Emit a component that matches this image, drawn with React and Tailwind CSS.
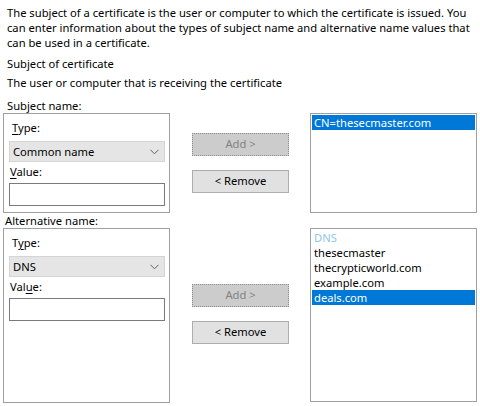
import React from 'react';

const font = { fontFamily: '"Segoe UI", "Noto Sans", "Liberation Sans", sans-serif' };

function Key({ children }) {
    return <span className="underline underline-offset-2">{children}</span>;
}

function Chevron() {
    return (
        <svg width="9" height="6" viewBox="0 0 9 6" className="text-[#606060]">
            <path d="M0.5 0.8 L4.5 4.8 L8.5 0.8" fill="none" stroke="currentColor" strokeWidth="1" />
        </svg>
    );
}

// group box with type combo and value input
function NameBox({ typeLabel, valueLabel, selected, height }) {
    return (
        <div className={`w-[167px] ${height} border border-[#a0a0a0] pl-[5px] pr-[4px] pt-[6px]`}>
            <div className="leading-[15px] pl-[3px]">{typeLabel}</div>
            <div className="mt-[6px] h-[21px] bg-[#e5e5e5] border border-[#d4d4d4] flex items-center justify-between pl-[3px] pr-[5px]">
                <span className="leading-[15px]">{selected}</span>
                <Chevron />
            </div>
            <div className="mt-[2px] leading-[15px] pl-[1px]">{valueLabel}</div>
            <div className="mt-[4px] h-[23px] border border-[#7a7a7a] bg-white" />
        </div>
    );
}

function Buttons({ top }) {
    return (
        <div className={`ml-[22px] w-[97px] flex flex-col ${top}`}>
            <div className="h-[23px] bg-[#cccccc] border border-dotted border-[#8c8c8c] flex items-center justify-center text-[#838383]">
                Add &gt;
            </div>
            <div className="mt-[14px] h-[23px] bg-[#e1e1e1] border border-[#adadad] flex items-center justify-center">
                &lt; Remove
            </div>
        </div>
    );
}

function ListBox({ items, header, selectedIndex, height }) {
    return (
        <div className={`ml-[21px] w-[167px] ${height} border border-[#a0a0a0] bg-white p-px`}>
            {header && <div className="leading-[15px] pl-[2px] text-[#8ec8e6]">{header}</div>}
            {items.map((item, i) => (
                <div
                    key={item}
                    className={`leading-[15px] pl-[2px] ${i === selectedIndex ? 'bg-[#0078d7] text-white' : ''}`}
                >
                    {item}
                </div>
            ))}
        </div>
    );
}

export default function App() {
    return (
        <div className="w-[480px] h-[406px] bg-white text-black text-[11.2px] overflow-hidden" style={font}>
            <div className="pl-[7px] pt-[5px] leading-[15px] whitespace-nowrap">
                <div>The subject of a certificate is the user or computer to which the certificate is issued. You</div>
                <div>can enter information about the types of subject name and alternative name values that</div>
                <div>can be used in a certificate.</div>
                <div className="mt-[6px]">Subject of certificate</div>
                <div className="mt-[4px]">The user or computer that is receiving the certificate</div>
            </div>

            <div className="pl-[7px] mt-[8px] leading-[15px]">Subject name:</div>
            <div className="flex items-start pl-[3px]">
                <NameBox
                    typeLabel={<><Key>T</Key>ype:</>}
                    valueLabel={<><Key>V</Key>alue:</>}
                    selected="Common name"
                    height="h-[100px]"
                />
                <Buttons top="mt-[20px]" />
                <ListBox items={['CN=thesecmaster.com']} selectedIndex={0} height="h-[100px]" />
            </div>

            <div className="pl-[5px] leading-[15px] whitespace-nowrap">Alternative name:</div>
            <div className="flex items-start pl-[3px]">
                <NameBox
                    typeLabel={<>T<Key>y</Key>pe:</>}
                    valueLabel={<>Val<Key>u</Key>e:</>}
                    selected="DNS"
                    height="h-[175px]"
                />
                <Buttons top="mt-[56px]" />
                <ListBox
                    header="DNS"
                    items={['thesecmaster', 'thecrypticworld.com', 'example.com', 'deals.com']}
                    selectedIndex={3}
                    height="h-[174px]"
                />
            </div>
        </div>
    );
}
